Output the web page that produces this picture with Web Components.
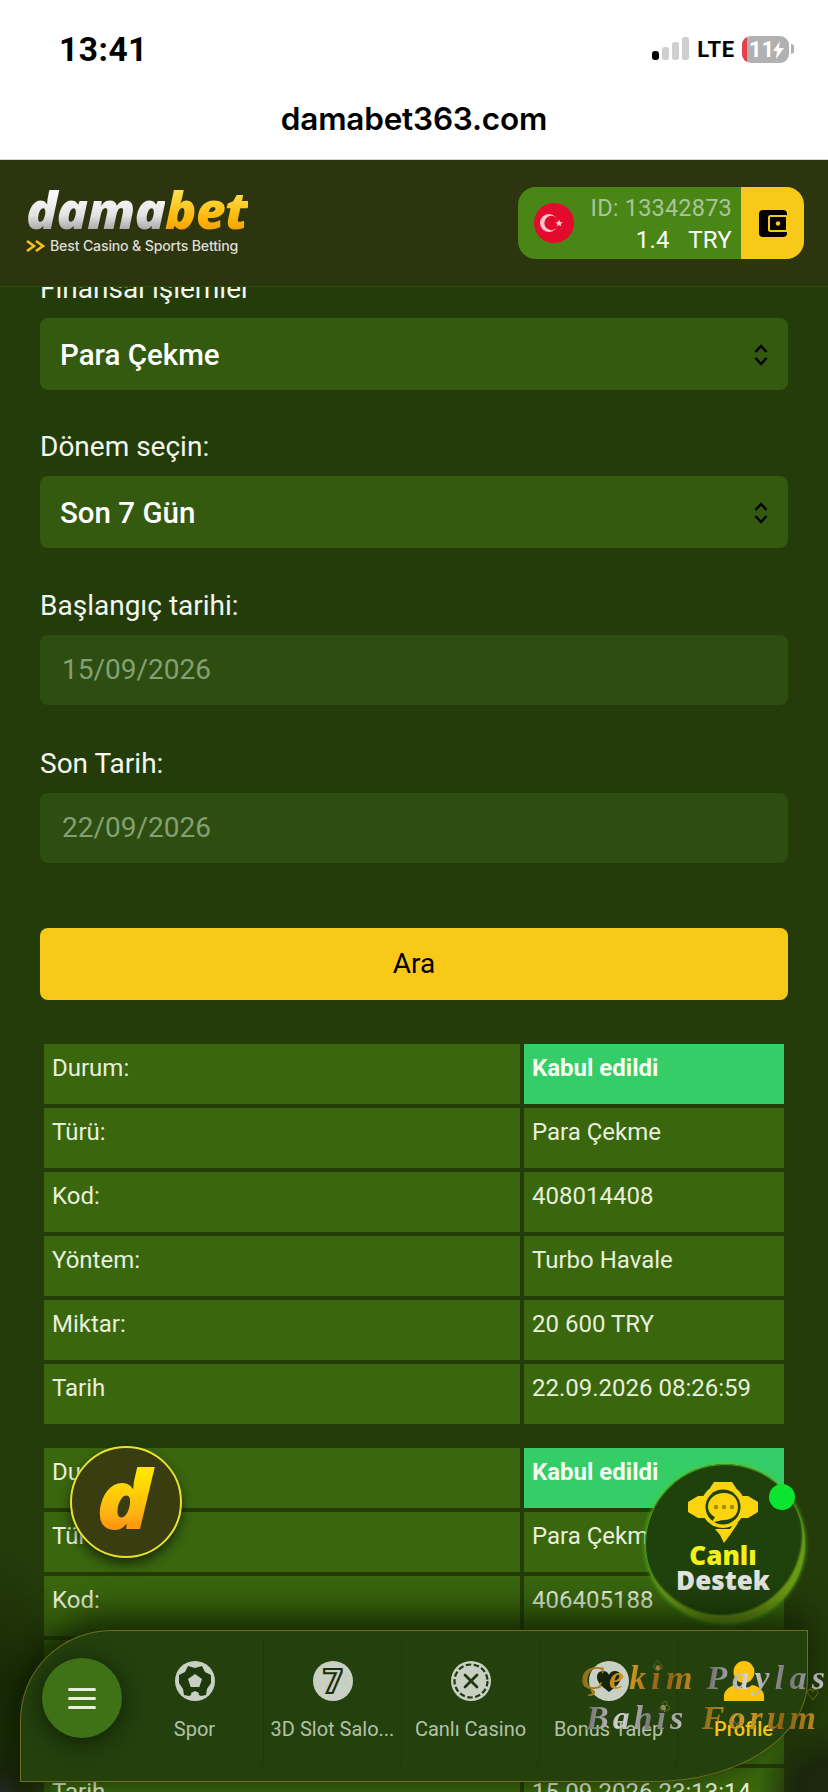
<!DOCTYPE html>
<html lang="tr">
<head>
<meta charset="utf-8">
<title>damabet363.com</title>
<style>
  html, body { margin: 0; padding: 0; background: #243c0a; }
  body { font-family: Roboto, "Liberation Sans", sans-serif; }
  app-shell { width: 828px; height: 1792px; }
</style>
</head>
<body>

<app-shell>
  <status-bar></status-bar>
  <site-header></site-header>

  <filter-field label="Finansal işlemler"><fake-select>Para Çekme</fake-select></filter-field>
  <filter-field label="Dönem seçin:" style="margin-bottom:43px"><fake-select>Son 7 Gün</fake-select></filter-field>
  <filter-field label="Başlangıç tarihi:" style="margin-bottom:44px"><date-box>15/09/2026</date-box></filter-field>
  <filter-field label="Son Tarih:" style="margin-bottom:65px"><date-box>22/09/2026</date-box></filter-field>
  <ara-button>Ara</ara-button>

  <record-table>
    <record-row label="Durum:" accent>Kabul edildi</record-row>
    <record-row label="Türü:">Para Çekme</record-row>
    <record-row label="Kod:">408014408</record-row>
    <record-row label="Yöntem:">Turbo Havale</record-row>
    <record-row label="Miktar:">20 600 TRY</record-row>
    <record-row label="Tarih">22.09.2026 08:26:59</record-row>
  </record-table>
  <record-table>
    <record-row label="Durum:" accent>Kabul edildi</record-row>
    <record-row label="Türü:">Para Çekme</record-row>
    <record-row label="Kod:">406405188</record-row>
    <record-row label="Yöntem:">Turbo Havale</record-row>
    <record-row label="Miktar:">20 000 TRY</record-row>
    <record-row label="Tarih">15.09.2026 23:13:14</record-row>
  </record-table>

  <!-- overlays -->
  <float-logo slot="over"></float-logo>
  <live-support slot="over"></live-support>
  <bottom-nav slot="over"></bottom-nav>
  <forum-mark slot="over"></forum-mark>
</app-shell>

<script>
// -------------------------------------------------
// app-shell: page frame, first two children on top, rest scrolled
// -------------------------------------------------
class AppShell extends HTMLElement {
  constructor() {
    super();
    this.attachShadow({ mode: "open" });
    this.shadowRoot.innerHTML = `
    <style>
      :host { display: block; position: relative; overflow: hidden; background: #243c0a; }
      .top { position: relative; z-index: 2; }
      .scroll { height: 1505px; overflow: hidden; }
      .inner { margin-top: -13px; padding: 0 40px; display: flex; flex-direction: column; }
      .corners {
        position: absolute; inset: 0; pointer-events: none;
        background:
          radial-gradient(ellipse 70px 150px at 0 1690px, rgba(12,24,3,.45), rgba(12,24,3,0)),
          radial-gradient(circle at 0 1792px, #2b2b2b 0, rgba(30,40,15,.8) 22px, rgba(30,40,15,0) 60px),
          radial-gradient(circle at 828px 1792px, #1f2710 0, rgba(25,35,12,.85) 30px, rgba(25,35,12,0) 70px);
      }
    </style>
    <div class="top"><slot name="head"></slot></div>
    <div class="scroll"><div class="inner"><slot></slot></div></div>
    <div class="corners"></div>
    <slot name="over"></slot>
    `;
    this.querySelector("status-bar").slot = "head";
    this.querySelector("site-header").slot = "head";
  }
}
customElements.define("app-shell", AppShell);

// -------------------------------------------------
// status-bar: hora, señal, batería y dominio
// -------------------------------------------------
class StatusBar extends HTMLElement {
  constructor() {
    super();
    this.attachShadow({ mode: "open" });
    this.shadowRoot.innerHTML = `
    <style>
      :host { display: block; height: 159px; background: #fff; color: #000; border-bottom: 1px solid #d8d8d0; font-family: Roboto, sans-serif; }
      .row { height: 98px; padding: 0 34px 0 59px; display: flex; align-items: center; justify-content: space-between; box-sizing: border-box; }
      .time { font: 700 33.5px Roboto, sans-serif; letter-spacing: .5px; }
      .right { display: flex; align-items: center; gap: 7px; }
      .lte { font: 700 22px Roboto, sans-serif; letter-spacing: .8px; }
      .url { text-align: center; font: 600 31.5px Inter, Roboto, sans-serif; line-height: 42px; letter-spacing: -.2px; }
      .bat {
        width: 47px; height: 27px; border-radius: 9px; background: #b1b1b1; color: #fff; position: relative;
        font: 700 22px/27px Roboto, sans-serif; overflow: hidden; box-sizing: border-box; padding-left: 7px;
      }
      .bat::before { content: ""; position: absolute; left: 0; top: 0; bottom: 0; width: 5px; background: #e8404a; }
      .bat svg { position: absolute; left: 30px; top: 5px; }
      .tip { width: 3px; height: 10px; background: #b1b1b1; border-radius: 0 3px 3px 0; margin-left: -5px; }
    </style>
    <div class="row">
      <span class="time">13:41</span>
      <span class="right">
        <svg width="38" height="24" viewBox="0 0 38 24">
          <rect x="0" y="14" width="7" height="9" rx="3" fill="#000"/>
          <rect x="10" y="10" width="7" height="13" rx="2.5" fill="#cfcfcf"/>
          <rect x="20" y="5" width="7" height="18" rx="2.5" fill="#cfcfcf"/>
          <rect x="30" y="0" width="7" height="23" rx="2.5" fill="#cfcfcf"/>
        </svg>
        <span class="lte">LTE</span>
        <span class="bat">11<svg width="13" height="18" viewBox="0 0 13 18"><path d="M8 0 1 10h4l-1 8 8-11H7z" fill="#fff"/></svg></span>
        <span class="tip"></span>
      </span>
    </div>
    <div class="url">damabet363.com</div>
    `;
  }
}
customElements.define("status-bar", StatusBar);

// -------------------------------------------------
// site-header: logo + wallet
// -------------------------------------------------
class SiteHeader extends HTMLElement {
  constructor() {
    super();
    this.attachShadow({ mode: "open" });
    this.shadowRoot.innerHTML = `
    <style>
      :host { display: flex; height: 127px; box-sizing: border-box; background: #2d350e; border-bottom: 1px solid #2e4a0c; justify-content: space-between; align-items: flex-start; padding: 0 24px 0 26px; }
      .logo { padding-top: 22px; }
      .word { font: italic 800 52px/54px "Open Sans", sans-serif; letter-spacing: -.9px; height: 54px; white-space: nowrap; }
      .dama { background: linear-gradient(#fff 25%, #e2e2e2 60%, #9a9a9a 85%); -webkit-background-clip: text; background-clip: text; color: transparent; }
      .bet { background: linear-gradient(#ffe14a 25%, #ffb50a 65%, #f59a00 85%); -webkit-background-clip: text; background-clip: text; color: transparent; }
      .tag { display: flex; align-items: center; gap: 4px; font: 500 14.2px/18px Inter, sans-serif; color: #dcdcd6; margin-top: 1px; letter-spacing: -.2px; white-space: nowrap; }
      .tag svg { flex: none; }
      .pill { margin-top: 27px; width: 286px; height: 72px; border-radius: 18px; overflow: hidden; display: flex; background: #4a8616; }
      .flag { width: 40px; height: 40px; margin: 16px 0 0 16px; flex: none; }
      .info { flex: 1; text-align: right; padding: 5px 9px 0 0; font: 400 23.5px/32px Roboto, sans-serif; }
      .id { color: #a8c59a; letter-spacing: .2px; }
      .bal { color: #fff; font-size: 24px; white-space: pre; letter-spacing: .3px; }
      .wallet { width: 63px; background: #f9c91a; display: flex; align-items: center; justify-content: center; flex: none; }
    </style>
    <div class="logo">
      <div class="word"><span class="dama">dama</span><span class="bet">bet</span></div>
      <div class="tag">
        <svg width="20" height="14" viewBox="0 0 20 14" fill="none" stroke="#f7c21a" stroke-width="2.6"><path d="M1 2l7 5-7 5M10 2l7 5-7 5"/></svg>
        Best Casino &amp; Sports Betting
      </div>
    </div>
    <div class="pill">
      <svg class="flag" viewBox="0 0 40 40">
        <circle cx="20" cy="20" r="20" fill="#e30a2e"/>
        <circle cx="15" cy="20" r="9" fill="#f7c9cf"/>
        <circle cx="17.5" cy="20" r="7.2" fill="#e30a2e"/>
        <path d="M25 16.5l1 2.6 2.8.1-2.2 1.7.8 2.7-2.4-1.6-2.3 1.6.8-2.7-2.2-1.7 2.8-.1z" fill="#f7c9cf"/>
      </svg>
      <div class="info">
        <div class="id">ID: 13342873</div>
        <div class="bal">1.4   TRY</div>
      </div>
      <div class="wallet">
        <svg width="28" height="27" viewBox="0 0 28 27">
          <rect x="0" y="0" width="28" height="27" rx="4" fill="#000"/>
          <rect x="10" y="6" width="18" height="15" rx="1.500" fill="#000" stroke="#f9c91a" stroke-width="2"/>
          <circle cx="19" cy="13.500" r="2.200" fill="#f9c91a"/>
        </svg>
      </div>
    </div>
    `;
  }
}
customElements.define("site-header", SiteHeader);

// -------------------------------------------------
// filter-field: etiqueta + control
// -------------------------------------------------
class FilterField extends HTMLElement {
  constructor() {
    super();
    this.attachShadow({ mode: "open" });
    this.shadowRoot.innerHTML = `
    <style>
      :host { display: block; margin-bottom: 42px; font-family: Roboto, sans-serif; }
      .lab { font-size: 28px; line-height: 30px; color: #f4f7ee; margin-bottom: 14px; }
    </style>
    <div class="lab"></div>
    <slot></slot>
    `;
  }
  connectedCallback() {
    this.shadowRoot.querySelector(".lab").textContent = this.getAttribute("label");
  }
}
customElements.define("filter-field", FilterField);

class FakeSelect extends HTMLElement {
  constructor() {
    super();
    this.attachShadow({ mode: "open" });
    this.shadowRoot.innerHTML = `
    <style>
      :host { display: flex; align-items: center; justify-content: space-between; height: 72px; box-sizing: border-box; padding: 1px 20px 0; background: #345a10; border-radius: 8px; color: #fff; font: 500 29.5px Roboto, sans-serif; }
    </style>
    <slot></slot>
    <svg width="14" height="24" viewBox="0 0 14 24" fill="none" stroke="#000" stroke-width="2.4"><path d="M1.5 9 7 3l5.5 6M1.5 15 7 21l5.5-6"/></svg>
    `;
  }
}
customElements.define("fake-select", FakeSelect);

class DateBox extends HTMLElement {
  constructor() {
    super();
    this.attachShadow({ mode: "open" });
    this.shadowRoot.innerHTML = `
    <style>
      :host { display: flex; align-items: center; height: 69px; padding: 0 22px 1px; background: #2d4e10; border-radius: 8px; color: #84a073; font: 400 28px Roboto, sans-serif; }
    </style>
    <slot></slot>
    `;
  }
}
customElements.define("date-box", DateBox);

class AraButton extends HTMLElement {
  constructor() {
    super();
    this.attachShadow({ mode: "open" });
    this.shadowRoot.innerHTML = `
    <style>
      :host { display: flex; align-items: center; justify-content: center; height: 70px; padding-bottom: 2px; background: #f9c91a; border-radius: 8px; color: #000; font: 400 28px Roboto, sans-serif; margin-bottom: 40px; }
    </style>
    <slot></slot>
    `;
  }
}
customElements.define("ara-button", AraButton);

// -------------------------------------------------
// tabla de movimientos
// -------------------------------------------------
class RecordTable extends HTMLElement {
  constructor() {
    super();
    this.attachShadow({ mode: "open" });
    this.shadowRoot.innerHTML = `
    <style>
      :host { display: flex; flex-direction: column; gap: 4px; padding: 4px; margin-bottom: 16px; flex: none; }
    </style>
    <slot></slot>
    `;
  }
}
customElements.define("record-table", RecordTable);

class RecordRow extends HTMLElement {
  constructor() {
    super();
    this.attachShadow({ mode: "open" });
    this.shadowRoot.innerHTML = `
    <style>
      :host { display: grid; grid-template-columns: 476px 260px; gap: 4px; font: 400 24px/30px Roboto, sans-serif; color: #e8f0dc; }
      .c { height: 60px; box-sizing: border-box; padding: 9px 8px; background: #3a660e; }
      :host([accent]) .val { background: #35cd67; color: #f4fff2; font-weight: 700; }
    </style>
    <div class="c lab"></div>
    <div class="c val"><slot></slot></div>
    `;
  }
  connectedCallback() {
    this.shadowRoot.querySelector(".lab").textContent = this.getAttribute("label");
  }
}
customElements.define("record-row", RecordRow);

// -------------------------------------------------
// botones flotantes
// -------------------------------------------------
class FloatLogo extends HTMLElement {
  constructor() {
    super();
    this.attachShadow({ mode: "open" });
    this.shadowRoot.innerHTML = `
    <style>
      :host { position: absolute; left: 70px; top: 1446px; width: 112px; height: 112px; box-sizing: border-box; border: 2px solid #e8e22f; border-radius: 50%; background: #3a3d10; box-shadow: 0 6px 12px rgba(0,0,0,.55); display: flex; align-items: center; justify-content: center; }
      span { font: italic 800 82px/92px "Open Sans", sans-serif; background: linear-gradient(#ffe600 25%, #ffb012 70%, #ff9a10 80%); -webkit-background-clip: text; background-clip: text; color: transparent; margin: -10px 4px 0 0; padding: 0 6px; transform: scaleX(1.12); }
    </style>
    <span>d</span>
    `;
  }
}
customElements.define("float-logo", FloatLogo);

class LiveSupport extends HTMLElement {
  constructor() {
    super();
    this.attachShadow({ mode: "open" });
    this.shadowRoot.innerHTML = `
    <style>
      :host { position: absolute; left: 645px; top: 1464px; width: 160px; height: 160px; border-radius: 50%; box-sizing: border-box; background: #1f420d; box-shadow: inset 0 0 0 1px #4f9a1c, inset -3px -9px 2px #6f9a14, 0 0 4px #63c21f; text-align: center; font: 800 26px/25px "Open Sans", sans-serif; padding: 18px 4px 0 0; }
      svg { display: block; margin: 0 auto; }
      .a { color: #f2ef1a; margin-top: 0; }
      .b { color: #e6e6e0; }
      i { position: absolute; left: 124px; top: 20px; width: 26px; height: 26px; border-radius: 50%; background: #0be52f; }
    </style>
    <svg width="70" height="61" viewBox="0 0 70 61">
      <path d="M0 20 10 14h50l10 6v10l-10 6H10L0 30z" fill="#fbd40e"/>
      <path d="M26 0h18l4 6H22z" fill="#fbd40e"/>
      <circle cx="35" cy="24" r="22" fill="#fbd40e"/>
      <circle cx="35" cy="25" r="17.500" fill="#1f420d"/>
      <path d="M36 11c9 0 14 6 14 14s-6 13-14 13c-3 0-8 2-12 2l3-5c-4-2-7-6-7-10 0-8 7-14 16-14z" fill="#fbd40e"/>
      <circle cx="28" cy="25" r="2.200" fill="#a38a10"/><circle cx="36" cy="25" r="2.200" fill="#a38a10"/><circle cx="44" cy="25" r="2.200" fill="#a38a10"/>
      <path d="M27 47h15l6-8 2 2-8 12-6 8-4-8z" fill="#fbd40e"/>
    </svg>
    <div class="a">Canlı</div>
    <div class="b">Destek</div>
    <i></i>
    `;
  }
}
customElements.define("live-support", LiveSupport);

// -------------------------------------------------
// bottom-nav
// -------------------------------------------------
const NAV_ICONS = {
  ball: `<svg width="40" height="40" viewBox="0 0 40 40"><circle cx="20" cy="20" r="20" fill="#c8d0c3"/>
    <path d="M13 5l7 2 7-2 3 6 6 3 0 8-4 6-1 6-5 1-6-3-6 3-5-1-1-6-4-6 0-8 6-3z" fill="#1e3a0d"/>
    <path d="M20 13l7 5-2.700 8h-8.600L13 18z" fill="#c8d0c3"/>
    <path d="M16 32l4-2 4 2-1 5h-6z" fill="#c8d0c3"/></svg>`,
  seven: `<svg width="40" height="40" viewBox="0 0 40 40"><circle cx="20" cy="20" r="20" fill="#c8d0c3"/>
    <text x="20" y="32" text-anchor="middle" font-family="Roboto, sans-serif" font-weight="900" font-size="34" fill="#c8d0c3" stroke="#1c2f0c" stroke-width="2.200">7</text></svg>`,
  chip: `<svg width="40" height="40" viewBox="0 0 40 40"><circle cx="20" cy="20" r="20" fill="#c8d0c3"/>
    <circle cx="20" cy="20" r="16.500" fill="none" stroke="#22390f" stroke-width="2.200" stroke-dasharray="5.500 2.500"/>
    <path d="M14 14l12 12M26 14 14 26" stroke="#22390f" stroke-width="2.800" stroke-linecap="round"/></svg>`,
  heart: `<svg width="40" height="40" viewBox="0 0 40 40"><circle cx="20" cy="20" r="20" fill="#c8d0c3"/>
    <path d="M20 31C12 25 8 21 8 16c0-4 3-6 6-6 3 0 5 1.500 6 4 1-2.500 3-4 6-4 3 0 6 2 6 6 0 5-4 9-12 15z" fill="#16240a"/></svg>`,
  user: `<svg width="40" height="40" viewBox="0 0 40 40" fill="#fbc30f"><ellipse cx="20" cy="11" rx="10.500" ry="11"/>
    <path d="M0 40v-5c0-6 6-10 12-11 2 2 5 3 8 3s6-1 8-3c6 1 12 5 12 11v5z"/></svg>`
};

class BottomNav extends HTMLElement {
  constructor() {
    super();
    this.attachShadow({ mode: "open" });
    const items = [["ball", "Spor"], ["seven", "3D Slot Salo..."], ["chip", "Canlı Casino"], ["heart", "Bonus Talep"], ["user", "Profile"]];
    this.shadowRoot.innerHTML = `
    <style>
      :host { position: absolute; left: 20px; top: 1630px; width: 788px; height: 152px; box-sizing: border-box; display: flex; padding: 8px 0 8px 105px; border: 1px solid #706e1c; border-radius: 92px 0 154px 0 / 90px 0 101px 0; background: #24400d; box-shadow: 0 -18px 34px rgba(15,30,3,.7), -10px 0 24px rgba(10,20,3,.5); }
      .menu { position: absolute; left: 21px; top: 27px; width: 80px; height: 80px; border-radius: 50%; background: #3f7216; box-shadow: 0 4px 22px rgba(10,20,2,.75); display: flex; flex-direction: column; gap: 6px; align-items: center; justify-content: center; }
      .menu b { width: 28px; height: 3px; border-radius: 2px; background: #e9efe0; }
      .it { width: 138px; flex: none; box-sizing: border-box; border-right: 1px solid #20390c; border-radius: 0 0 14px 0; display: flex; flex-direction: column; align-items: center; padding-top: 22px; gap: 15px; font: 400 20px/26px Roboto, sans-serif; color: #b3c3a8; white-space: nowrap; }
      .it:last-child { border: none; width: 131px; color: #fbc30f; font-weight: 500; }
      .it svg { display: block; }
    </style>
    <div class="menu"><b></b><b></b><b></b></div>
    ${items.map(i => `<div class="it">${NAV_ICONS[i[0]]}<span>${i[1]}</span></div>`).join("")}
    `;
  }
}
customElements.define("bottom-nav", BottomNav);

// -------------------------------------------------
// marca de agua del foro
// -------------------------------------------------
class ForumMark extends HTMLElement {
  constructor() {
    super();
    this.attachShadow({ mode: "open" });
    this.shadowRoot.innerHTML = `
    <style>
      :host { position: absolute; left: 578px; top: 1655px; width: 250px; height: 90px; font: italic 700 34px/40px "Liberation Serif", serif; letter-spacing: 5.2px; word-spacing: -5px; white-space: nowrap; pointer-events: none; }
      div { position: absolute; }
      .l1 { left: 3px; top: 3px; }
      .l2 { left: 8px; top: 43px; letter-spacing: 4px; word-spacing: 2px; }
      .g { background: linear-gradient(100deg, #8a6a1a, #d49a25 40%, #8a5e14 70%, #c8901f); -webkit-background-clip: text; background-clip: text; color: transparent; }
      .s { background: linear-gradient(100deg, #5f5f5f, #d8d8d8 35%, #6f6f6f 65%, #d0d0d0); -webkit-background-clip: text; background-clip: text; color: transparent; }
      u { position: absolute; text-decoration: none; font: 400 15px/16px "DejaVu Sans", sans-serif; }
    </style>
    <div class="l1"><span class="g">Çekim</span> <span class="s">Paylas</span></div>
    <div class="l2"><span class="s">Bahis</span> <span class="g">Forum</span></div>
    <u style="left:73px;top:3px;color:#8fa283">♤</u>
    <u style="left:80px;top:44px;color:#b3a320">♧</u>
    <u style="left:152px;top:57px;color:#c9cfc2">♢</u>
    <u style="left:228px;top:32px;color:#b3a320">♡</u>
    `;
  }
}
customElements.define("forum-mark", ForumMark);
</script>
</body>
</html>
